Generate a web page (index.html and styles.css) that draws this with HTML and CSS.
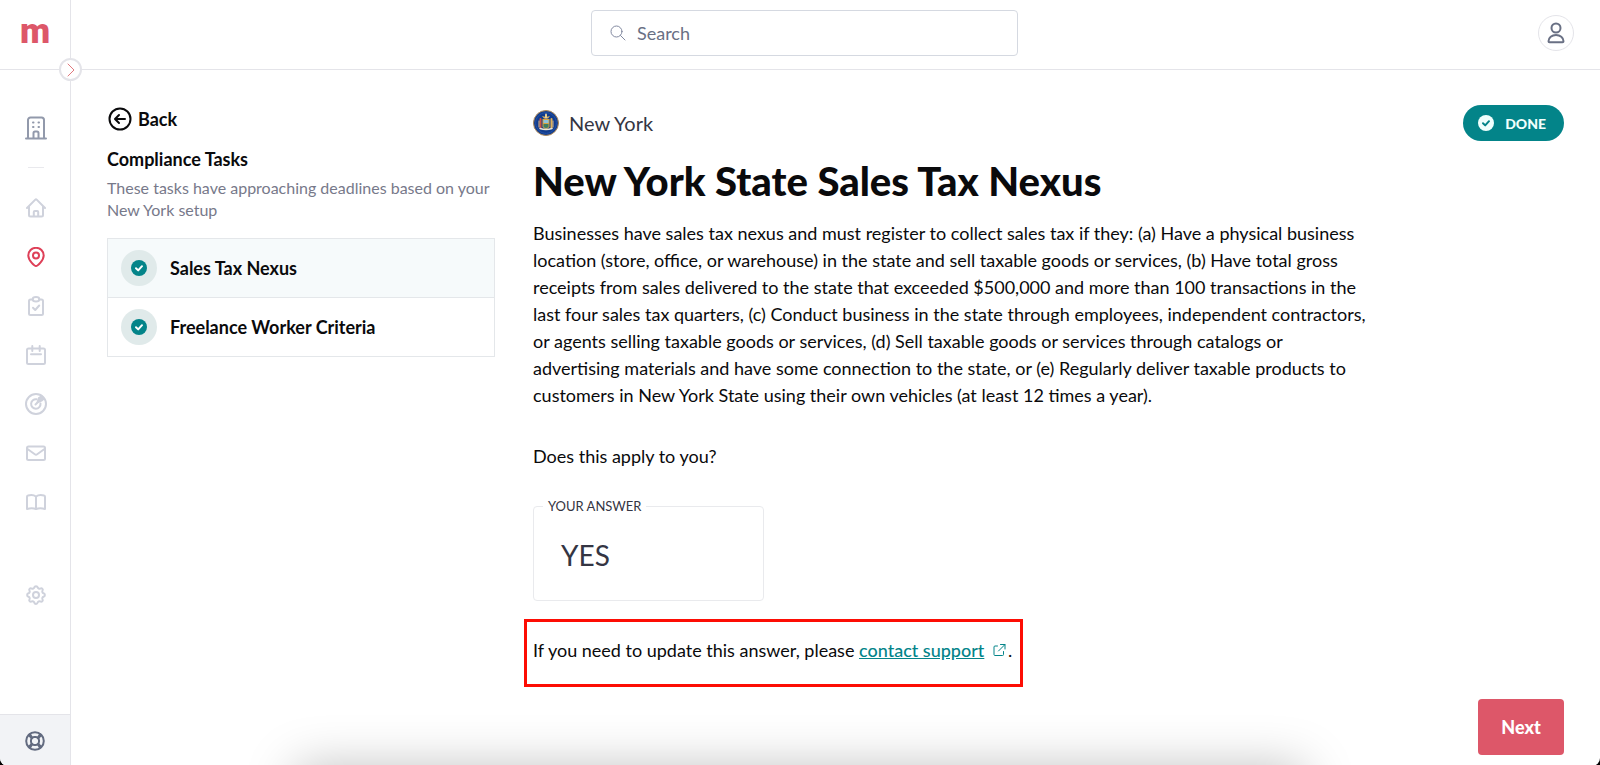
FILE: index.html
```html
<!DOCTYPE html>
<html lang="en">
  <head>
    <meta charset="UTF-8" />
    <meta name="viewport" content="width=device-width, initial-scale=1.0" />
    <title>New York State Sales Tax Nexus</title>
    <link rel="stylesheet" href="styles.css">
  </head>
  <body>
    <div class="app">
      <aside class="sidebar">
        <a class="logo" href="#">m</a>
        <button class="toggle" type="button" aria-label="Expand menu">
          <svg width="8" height="14" viewBox="0 0 8 14"><path d="M1 1l6 6-6 6" /></svg>
        </button>
        <nav class="nav">
          <a class="nav-link company" href="#" aria-label="Company">
            <svg width="22" height="24" viewBox="0 0 22 24">
              <path d="M1 22.500h20M3 22V4a2.500 2.500 0 0 1 2.500-2.500h11A2.500 2.500 0 0 1 19 4v18M8.500 22v-5a1.500 1.500 0 0 1 1.500-1.500h2a1.500 1.500 0 0 1 1.500 1.500v5" />
              <path d="M8 6.500h.5M13.500 6.500h.5M8 11h.5M13.500 11h.5" />
            </svg>
          </a>
          <hr class="divider" />
          <a class="nav-link" href="#" aria-label="Home">
            <svg width="20" height="20" viewBox="0 0 20 20">
              <path d="M1 10l8.300-8.400a1 1 0 0 1 1.400 0L19 10M3 8.200V17a1.500 1.500 0 0 0 1.500 1.500h11A1.500 1.500 0 0 0 17 17V8.200M7.800 18.500V14a1 1 0 0 1 1-1h2.400a1 1 0 0 1 1 1v4.500" />
            </svg>
          </a>
          <a class="nav-link active" href="#" aria-label="Locations">
            <svg width="20" height="20" viewBox="0 0 20 20">
              <path d="M10 19c-1.500 0-7.700-5.700-7.700-10.500a7.700 7.700 0 0 1 15.400 0C17.700 13.300 11.500 19 10 19z" />
              <circle cx="10" cy="8.500" r="3" />
            </svg>
          </a>
          <a class="nav-link" href="#" aria-label="Tasks">
            <svg width="20" height="20" viewBox="0 0 20 20">
              <path d="M6.500 3.500h-2A1.500 1.500 0 0 0 3 5v12.500A1.500 1.500 0 0 0 4.500 19h11a1.500 1.500 0 0 0 1.500-1.500V5a1.500 1.500 0 0 0-1.500-1.500h-2" />
              <ellipse cx="10" cy="3.200" rx="3.300" ry="2.200" />
              <path d="M7 11.800l2.200 2.200 4-4.500" />
            </svg>
          </a>
          <a class="nav-link" href="#" aria-label="Calendar">
            <svg width="20" height="20" viewBox="0 0 20 20">
              <rect x="1" y="3.500" width="18" height="15.500" rx="1.500" />
              <path d="M6.300 1v5M13.700 1v5M5 9.300h10" />
            </svg>
          </a>
          <a class="nav-link" href="#" aria-label="Goals">
            <svg width="22" height="22" viewBox="0 0 22 22">
              <circle cx="11" cy="11" r="10" />
              <path d="M15.500 10.500A4.700 4.700 0 1 1 11.500 6.300M10.500 11.500l3-3" />
              <path class="solid" d="M11 11l2-6.500 3.500-2.500 3.500 4-3 2.500z" />
            </svg>
          </a>
          <a class="nav-link" href="#" aria-label="Mail">
            <svg width="20" height="20" viewBox="0 0 20 20">
              <rect x="1" y="3.500" width="18" height="13.500" rx="1.500" />
              <path d="M1.500 6l7.300 5.200a2 2 0 0 0 2.400 0L18.500 6" />
            </svg>
          </a>
          <a class="nav-link" href="#" aria-label="Guides">
            <svg width="20" height="20" viewBox="0 0 20 20">
              <path d="M10 4.500C8 3 4.500 2.800 2 3.500a1.300 1.300 0 0 0-1 1.300V17c3-1 7-.8 9 0 2-.8 6-1 9 0V4.800a1.300 1.300 0 0 0-1-1.300c-2.500-.7-6-.5-8 1zM10 4.500V17" />
            </svg>
          </a>
          <a class="nav-link settings" href="#" aria-label="Settings">
            <svg width="20" height="20" viewBox="0 0 20 20">
              <path d="M8.300 2.400c.5-1.700 2.900-1.700 3.400 0a1.800 1.800 0 0 0 2.600 1.100c1.500-.9 3.100.7 2.200 2.200a1.800 1.800 0 0 0 1.100 2.600c1.700.5 1.700 2.900 0 3.400a1.800 1.800 0 0 0-1.100 2.600c.9 1.500-.7 3.100-2.200 2.200a1.800 1.800 0 0 0-2.600 1.100c-.5 1.700-2.900 1.700-3.400 0a1.800 1.800 0 0 0-2.600-1.100c-1.500.9-3.100-.7-2.200-2.200a1.800 1.800 0 0 0-1.100-2.600c-1.700-.5-1.700-2.900 0-3.400a1.800 1.800 0 0 0 1.100-2.600c-.9-1.500.7-3.100 2.200-2.200a1.800 1.800 0 0 0 2.600-1.100z" />
              <circle cx="10" cy="10" r="3" />
            </svg>
          </a>
        </nav>
        <a class="help" href="#" aria-label="Help">
          <svg width="20" height="20" viewBox="0 0 20 20">
            <circle cx="10" cy="10" r="8.800" />
            <rect x="6" y="6" width="8" height="8" rx="3.500" />
            <path d="M6.800 7.200L4 4.400M7.200 6.800L5 3.200M13.200 7.200L16 4.400M12.800 6.800L15 3.200M6.800 12.800L4 15.600M7.200 13.200L5 16.800M13.200 12.800l2.800 2.800M12.800 13.200l2.200 3.600" />
          </svg>
        </a>
      </aside>

      <div class="page">
        <header class="header">
          <label class="search">
            <svg width="16" height="16" viewBox="0 0 16 16"><circle cx="6.500" cy="6.500" r="5.500" /><path d="M10.500 10.500L15 15" /></svg>
            <input type="search" placeholder="Search" aria-label="Search" />
          </label>
          <button class="account" type="button" aria-label="Account">
            <svg width="18" height="22" viewBox="0 0 18 22">
              <circle cx="9" cy="6" r="4.500" />
              <path d="M1.500 19.200a7.500 6.200 0 0 1 15 0 1 1 0 0 1-1 1h-13a1 1 0 0 1-1-1z" />
            </svg>
          </button>
        </header>

        <div class="content">
          <section class="tasks">
            <a class="back" href="#">
              <svg width="24" height="24" viewBox="0 0 24 24">
                <circle cx="12" cy="12" r="10.500" />
                <path d="M17 12H7.500M11 8l-4 4 4 4" />
              </svg>
              Back
            </a>
            <h2>Compliance Tasks</h2>
            <p class="hint">These tasks have approaching deadlines based on your New York setup</p>
            <ul class="task-list">
              <li>
                <a class="task selected" href="#">
                  <span class="badge">
                    <svg class="check" width="16" height="16" viewBox="0 0 16 16"><circle cx="8" cy="8" r="8" /><path d="M5 8.300L7.200 10.400 11 6.200" /></svg>
                  </span>
                  Sales Tax Nexus
                </a>
              </li>
              <li>
                <a class="task" href="#">
                  <span class="badge">
                    <svg class="check" width="16" height="16" viewBox="0 0 16 16"><circle cx="8" cy="8" r="8" /><path d="M5 8.300L7.200 10.400 11 6.200" /></svg>
                  </span>
                  Freelance Worker Criteria
                </a>
              </li>
            </ul>
          </section>

          <main class="detail">
            <div class="detail-top">
              <div class="state">
                <svg width="26" height="26" viewBox="0 0 26 26">
                  <circle cx="13" cy="13" r="12.500" fill="#123c8c" stroke="#b08a58" />
                  <circle cx="13" cy="13" r="10.300" fill="none" stroke="#2857ae" stroke-dasharray="1 1" />
                  <path d="M9.500 9h7v8q-3.500 4-7 0z" fill="#d5a33f" />
                  <path d="M10.500 10h5v3h-5z" fill="#8dc3dc" />
                  <path d="M10.500 14h5v3q-2.500 2-5 0z" fill="#3f7d63" />
                  <path d="M7.500 9v9" stroke="#c9523f" stroke-width="2" />
                  <path d="M18.500 9v9" stroke="#dfb25a" stroke-width="2" />
                  <path d="M6 11v6M20 11v6" stroke="#dcb98a" />
                  <path d="M9 6l4 1 4-1-2 2.500h-4z" fill="#dfb25a" />
                  <path d="M13 4.500v3" stroke="#e8cf95" stroke-width="2" />
                  <path d="M7 18.500q6 2 12 0" fill="none" stroke="#e9e4d4" stroke-width="1.500" />
                </svg>
                <span>New York</span>
              </div>
              <button class="done" type="button">
                <svg class="check" width="16" height="16" viewBox="0 0 16 16"><circle cx="8" cy="8" r="8" /><path d="M5 8.300L7.200 10.400 11 6.200" /></svg>
                DONE
              </button>
            </div>
            <h1>New York State Sales Tax Nexus</h1>
            <p class="description">
              Businesses have sales tax nexus and must register to collect sales tax if they: (a) Have a physical business
              location (store, office, or warehouse) in the state and sell taxable goods or services, (b) Have total gross
              receipts from sales delivered to the state that exceeded $500,000 and more than 100 transactions in the
              last four sales tax quarters, (c) Conduct business in the state through employees, independent contractors,
              or agents selling taxable goods or services, (d) Sell taxable goods or services through catalogs or
              advertising materials and have some connection to the state, or (e) Regularly deliver taxable products to
              customers in New York State using their own vehicles (at least 12 times a year).
            </p>
            <p class="question">Does this apply to you?</p>
            <fieldset class="answer">
              <legend>YOUR ANSWER</legend>
              YES
            </fieldset>
            <p class="support">
              If you need to update this answer, please <a href="#">contact support</a>
              <svg width="14" height="14" viewBox="0 0 14 14"><path d="M5.500 3H3a1 1 0 0 0-1 1v7.500a1 1 0 0 0 1 1h7.500a1 1 0 0 0 1-1V8.500M8.500 1.500H13V6M13 1.500L6.500 8" /></svg>.
            </p>
            <button class="next" type="button">Next</button>
          </main>
        </div>
      </div>
      <div class="bottom-shade"></div>
    </div>
  </body>
</html>
```
FILE: styles.css
```css
* {
  box-sizing: border-box;
}

html {
  background-color: #000;
}

body {
  margin: 0;
  font-family: Lato, "Liberation Sans", sans-serif;
  font-size: 18px;
  line-height: 27px;
  color: #0a0a0c;
}

h1,
h2,
p,
ul {
  margin: 0;
  padding: 0;
}

a {
  color: inherit;
  text-decoration: none;
}

button,
input {
  font: inherit;
  color: inherit;
}

button {
  padding: 0;
  cursor: pointer;
}

svg {
  flex: none;
  fill: none;
  stroke-linecap: round;
  stroke-linejoin: round;
}

.app {
  position: relative;
  display: flex;
  min-height: 100vh;
  overflow: hidden;
  background-color: #fff;
  border-radius: 0 0 8px 8px;
}

/* sidebar */
.sidebar {
  position: relative;
  display: flex;
  flex-direction: column;
  flex: none;
  width: 71px;
  border-right: 1px solid #e4e4e9;
}

.logo {
  height: 70px;
  border-bottom: 1px solid #e4e4e9;
  font-family: Roboto, sans-serif;
  font-size: 35px;
  font-weight: 900;
  line-height: 63px;
  text-align: center;
  color: #dd5769;
}

.toggle {
  position: absolute;
  top: 58px;
  right: -12px;
  z-index: 1;
  display: flex;
  align-items: center;
  justify-content: center;
  width: 23px;
  height: 23px;
  background-color: #fff;
  border: 2px solid #e4e4e9;
  border-radius: 50%;
  stroke: #e0787d;
}

.nav {
  display: flex;
  flex-direction: column;
  align-items: center;
  padding: 33px 0 0 1px;
}

.nav-link {
  display: flex;
  align-items: center;
  justify-content: center;
  width: 49px;
  height: 49px;
  stroke: #cfd2dc;
  stroke-width: 2;
}

.company {
  stroke: #9299ab;
}

.active {
  stroke: #de4058;
}

.nav-link .solid {
  fill: #cfd2dc;
  stroke: none;
}

.divider {
  width: 16px;
  margin: 15px 0;
  border: 0;
  border-top: 1px solid #e9e9ed;
}

.settings {
  margin-top: 44px;
}

.help {
  display: flex;
  align-items: center;
  justify-content: center;
  height: 52px;
  margin-top: auto;
  background-color: #f2f3f6;
  border-top: 1px solid #e4e4e9;
  stroke: #636b80;
  stroke-width: 2;
}

/* header */
.page {
  display: flex;
  flex-direction: column;
  flex: 1;
  min-width: 0;
}

.header {
  display: grid;
  grid-template-columns: 1fr 427px 1fr;
  align-items: center;
  height: 70px;
  padding: 0 62px 3px 0;
  border-bottom: 1px solid #e4e4e9;
}

.search {
  grid-column: 2;
  display: flex;
  align-items: center;
  gap: 11px;
  height: 46px;
  padding: 0 18px;
  border: 1px solid #d5d9e1;
  border-radius: 4px;
  stroke: #8289a0;
}

.search input {
  flex: 1;
  min-width: 0;
  padding: 0;
  border: 0;
  outline: 0;
  background: none;
}

.search input::placeholder {
  color: #697084;
  opacity: 1;
}

.account {
  justify-self: end;
  display: flex;
  align-items: center;
  justify-content: center;
  width: 36px;
  height: 36px;
  margin-right: -36px;
  background-color: #fff;
  border: 1px solid #e4e4e9;
  border-radius: 50%;
  stroke: #697084;
  stroke-width: 2;
}

/* content */
.content {
  display: flex;
  flex: 1;
  gap: 38px;
  padding: 35px 36px 11px;
}

.tasks {
  flex: 0 1 388px;
}

.back {
  display: flex;
  align-items: center;
  gap: 6px;
  height: 28px;
  padding-left: 1px;
  font-weight: 700;
  stroke: #0a0a0c;
  stroke-width: 2;
}

h2 {
  margin-top: 13px;
  font-size: 18px;
  font-weight: 700;
  line-height: 27px;
}

.hint {
  margin-top: 4px;
  font-size: 16px;
  line-height: 22px;
  color: #77798a;
}

.task-list {
  margin-top: 17px;
  border: 1px solid #e4e7ea;
  list-style: none;
}

.task-list li + li {
  border-top: 1px solid #e4e7ea;
}

.task {
  display: flex;
  align-items: center;
  gap: 13px;
  height: 58px;
  padding: 0 13px;
  font-weight: 700;
}

.selected {
  background-color: #f6fafb;
}

.badge {
  display: flex;
  align-items: center;
  justify-content: center;
  width: 36px;
  height: 36px;
  background-color: #e0eaea;
  border-radius: 50%;
}

.check {
  fill: #038489;
}

.check path {
  fill: none;
  stroke: #fff;
  stroke-width: 2;
}

.detail {
  display: flex;
  flex-direction: column;
  align-items: flex-start;
  flex: 1;
}

.detail-top {
  display: flex;
  align-items: center;
  justify-content: space-between;
  align-self: stretch;
}

.state {
  display: flex;
  align-items: center;
  gap: 10px;
  font-size: 20px;
  color: #343543;
}

.done {
  display: flex;
  align-items: center;
  gap: 11px;
  height: 36px;
  padding: 0 18px 0 15px;
  background-color: #038489;
  border: 0;
  border-radius: 18px;
  font-size: 14px;
  font-weight: 900;
  color: #f0fffd;
}

.done .check {
  fill: #f0fffd;
}

.done .check path {
  stroke: #038489;
}

h1 {
  margin-top: 15px;
  font-size: 40px;
  font-weight: 900;
  line-height: 50px;
}

.description {
  max-width: 836px;
  margin-top: 14px;
}

.question {
  margin-top: 34px;
}

.answer {
  width: 231px;
  height: 103px;
  margin: 28px 0 0;
  padding: 27px 27px 0;
  border: 1px solid #e9eaed;
  border-radius: 4px;
  font-size: 28px;
  line-height: 28px;
  color: #343543;
}

.answer legend {
  margin-left: -18px;
  padding: 0 5px;
  font-size: 13px;
  line-height: 16px;
}

.support {
  margin: 18px 0 12px -9px;
  padding: 15px 8px 20px 6px;
  border: 3px solid #fd0d04;
}

.support a {
  font-weight: 500;
  color: #038489;
  text-decoration: underline;
}

.support svg {
  margin: 0 2px 0 3px;
  stroke: #038489;
}

.next {
  align-self: flex-end;
  width: 86px;
  height: 56px;
  margin-top: auto;
  background-color: #dd5769;
  border: 0;
  border-radius: 4px;
  font-weight: 900;
  color: #fff;
}

/* soft shadow rising from the bottom edge */
.bottom-shade {
  position: absolute;
  top: 100%;
  left: 19%;
  right: 19%;
  height: 40px;
  box-shadow: 0 9px 50px 8px rgba(0, 0, 0, 0.25);
  pointer-events: none;
}
```
